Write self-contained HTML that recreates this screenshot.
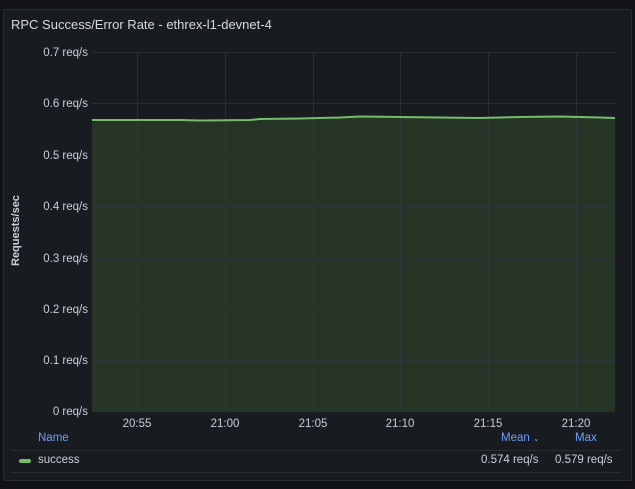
<!DOCTYPE html>
<html><head><meta charset="utf-8"><style>
body{margin:0;width:635px;height:489px;background:#111217;font-family:"Liberation Sans",sans-serif;overflow:hidden;position:relative}
.panel{position:absolute;left:3px;top:9px;width:627px;height:470px;background:#181b1f;border:1px solid #2a2d33;border-radius:2px}
.t{position:absolute;font-size:12px;color:#ccccdc}
.y{position:absolute;right:547px;font-size:11.5px;color:#ccccdc;text-align:right;white-space:nowrap}
.x{position:absolute;top:418px;font-size:11.5px;color:#ccccdc;width:50px;text-align:center;margin-left:-25px}
.b{position:absolute;font-size:11.5px;color:#6e9fff}
.v{position:absolute;font-size:11.5px;color:#ccccdc}
</style></head><body>
<div class="panel"></div>
<div class="t" style="left:11px;top:17px;font-size:13px;color:#d8d9e0">RPC Success/Error Rate - ethrex-l1-devnet-4</div>
<svg style="position:absolute;left:0;top:0" width="635" height="489">
<g stroke="#2a2e33" stroke-width="1">
<line x1="92" y1="52.5" x2="615" y2="52.5"/><line x1="92" y1="103.5" x2="615" y2="103.5"/><line x1="92" y1="155.5" x2="615" y2="155.5"/><line x1="92" y1="206.5" x2="615" y2="206.5"/><line x1="92" y1="258.5" x2="615" y2="258.5"/><line x1="92" y1="309.5" x2="615" y2="309.5"/><line x1="92" y1="360.5" x2="615" y2="360.5"/><line x1="92" y1="411.5" x2="615" y2="411.5"/>
<line x1="137.5" y1="52" x2="137.5" y2="411"/><line x1="225.5" y1="52" x2="225.5" y2="411"/><line x1="313.5" y1="52" x2="313.5" y2="411"/><line x1="400.5" y1="52" x2="400.5" y2="411"/><line x1="488.5" y1="52" x2="488.5" y2="411"/><line x1="576.5" y1="52" x2="576.5" y2="411"/>
</g>
<path d="M92 120 L180 120 L200 120.5 L250 120 L260 119 L300 118.5 L340 117.5 L360 116.5 L400 117 L440 117.5 L480 118 L520 117 L560 116.5 L600 117.5 L615 118 L615 411 L92 411Z" fill="#273527"/>
<g stroke="#30363b" stroke-width="1"><line x1="137.5" y1="121" x2="137.5" y2="411"/><line x1="225.5" y1="121" x2="225.5" y2="411"/><line x1="313.5" y1="120" x2="313.5" y2="411"/><line x1="400.5" y1="118" x2="400.5" y2="411"/><line x1="488.5" y1="119" x2="488.5" y2="411"/><line x1="576.5" y1="118" x2="576.5" y2="411"/>
<line x1="92" y1="155.5" x2="615" y2="155.5"/><line x1="92" y1="206.5" x2="615" y2="206.5"/><line x1="92" y1="258.5" x2="615" y2="258.5"/><line x1="92" y1="309.5" x2="615" y2="309.5"/><line x1="92" y1="360.5" x2="615" y2="360.5"/></g>
<path d="M92 120 L180 120 L200 120.5 L250 120 L260 119 L300 118.5 L340 117.5 L360 116.5 L400 117 L440 117.5 L480 118 L520 117 L560 116.5 L600 117.5 L615 118" fill="none" stroke="#73bf69" stroke-width="2"/>
<line x1="11" y1="450.5" x2="621" y2="450.5" stroke="#2a2d33"/>
<line x1="11" y1="472.5" x2="621" y2="472.5" stroke="#2a2d33"/>
<rect x="19" y="459" width="12" height="4" rx="2" fill="#73bf69"/>
</svg>
<div class="y" style="top:47px">0.7 req/s</div>
<div class="y" style="top:98px">0.6 req/s</div>
<div class="y" style="top:150px">0.5 req/s</div>
<div class="y" style="top:201px">0.4 req/s</div>
<div class="y" style="top:253px">0.3 req/s</div>
<div class="y" style="top:304px">0.2 req/s</div>
<div class="y" style="top:355px">0.1 req/s</div>
<div class="y" style="top:406px">0 req/s</div>
<div class="t" style="left:-19px;top:225px;transform:rotate(-90deg);font-size:11px;font-weight:bold;width:70px;text-align:center;color:#ccccdc">Requests/sec</div>
<div class="x" style="left:137px">20:55</div>
<div class="x" style="left:225px">21:00</div>
<div class="x" style="left:313px">21:05</div>
<div class="x" style="left:400px">21:10</div>
<div class="x" style="left:488px">21:15</div>
<div class="x" style="left:576px">21:20</div>
<div class="b" style="left:38px;top:432px">Name</div>
<div class="b" style="left:501px;top:432px">Mean <span style="font-size:8px">⌄</span></div>
<div class="b" style="left:575px;top:432px">Max</div>
<div class="v" style="left:38px;top:454px">success</div>
<div class="v" style="left:481px;top:454px">0.574 req/s</div>
<div class="v" style="left:555px;top:454px">0.579 req/s</div>
</body></html>
